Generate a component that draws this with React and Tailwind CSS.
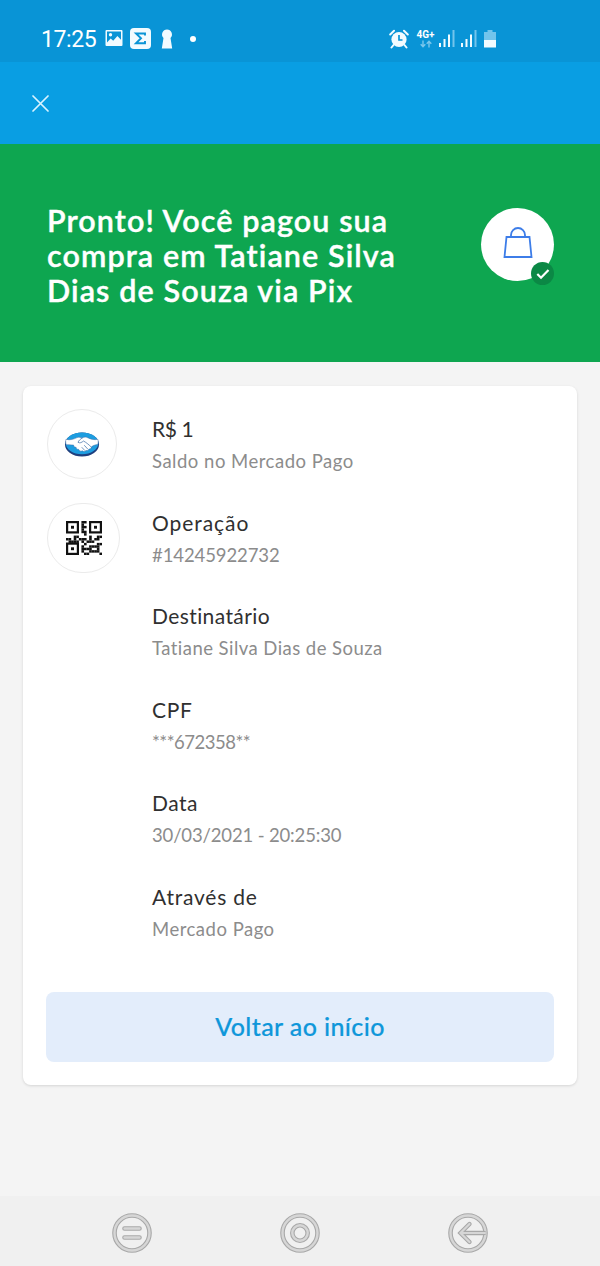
import React from 'react';

// data cells of the code, the three corner finders are drawn apart
const QR_ROWS = [
  '00000011000000',
  '00000010000000',
  '00000011000000',
  '00000010000000',
  '00000011000000',
  '00000001000000',
  '00011000010011',
  '11010111010110',
  '01111010111000',
  '00000001000011',
  '00000010011110',
  '00000011110010',
  '00000010011110',
  '00000001100001',
];

const QR_FINDERS = [
  [0, 0],
  [23, 0],
  [0, 21.5],
];

const details = [
  { label: 'R$ 1', value: 'Saldo no Mercado Pago', icon: 'logo', labelClass: 'tracking-[-0.4px]', valueClass: 'tracking-[0.5px]' },
  { label: 'Operação', value: '#14245922732', icon: 'qr', labelClass: 'tracking-[0.95px]', valueClass: 'tracking-[-0.1px]' },
  { label: 'Destinatário', value: 'Tatiane Silva Dias de Souza', labelClass: 'tracking-[0.4px]', valueClass: 'tracking-[0.45px]' },
  { label: 'CPF', value: '***672358**', labelClass: 'tracking-[0.7px]', valueClass: 'tracking-[-0.5px]' },
  { label: 'Data', value: '30/03/2021 - 20:25:30', labelClass: 'tracking-[0.5px]', valueClass: 'tracking-[-0.15px]' },
  { label: 'Através de', value: 'Mercado Pago', labelClass: 'tracking-[0.8px]', valueClass: 'tracking-[0.5px]' },
];

const HandshakeLogo = () => (
  <svg width="36" height="26" viewBox="0 0 36 26">
    <ellipse cx="18" cy="13.500" rx="17" ry="12" fill="#1f3f7e" />
    <ellipse cx="18" cy="12.300" rx="16.300" ry="10.900" fill="#1d9de0" />
    <path
      d="M2 8.200C6 9.500 9.500 8.300 13 6.600c2-.8 4 .2 5.300.2 2-.9 4-1 6 .2 3 1.300 6 2.200 9.500 1.300.6 2 .6 3.800-.2 5.300-2.400.1-4.300 1-6.100 2.200 0 1.700-1.300 2.400-2.500 2.200-.5 1.500-1.900 1.900-3 1.400-1 1.500-2.700 1.400-3.600.4-1.700.9-3.600.1-3.800-1.500-1.500.2-2.600-.7-2.500-2-1.700.2-2.700-1-2.400-2.200C7.300 14 5 13.400 2.300 13.800 1.500 12 1.500 10 2 8.200z"
      fill="#fff"
      stroke="#3c6ba5"
      strokeWidth=".5"
    />
    <path
      d="M18.300 7c-2 1-3.600 2.600-4.300 4.300 1.700 1.200 3.700.2 5.500-1.300 3 1.600 5.800 4.100 8 6.300M20.500 14.500l3.200 3.500M18 16.500l2.600 2.800"
      fill="none"
      stroke="#3c6ba5"
      strokeWidth=".7"
      strokeLinecap="round"
    />
  </svg>
);

const QrCode = () => (
  <svg width="36" height="34" viewBox="0 0 36 34" fill="#111">
    {QR_FINDERS.map(([x, y]) => (
      <g key={`${x}-${y}`}>
        <rect x={x + 1.1} y={y + 1.1} width="10.800" height="10.300" fill="none" stroke="#111" strokeWidth="2.200" />
        <rect x={x + 5} y={y + 4.8} width="3" height="2.900" />
      </g>
    ))}
    {QR_ROWS.map((row, y) =>
      row.split('').map((cell, x) =>
        cell === '1' ? <rect key={`${x}-${y}`} x={x * 2.57} y={y * 2.43} width="2.620" height="2.480" /> : null
      )
    )}
  </svg>
);

const StatusBar = () => (
  <div className="flex h-[62px] shrink-0 items-center bg-[#0994d6] pt-[15px] pl-[41px] text-white">
    <span className="w-[64px] pt-0.5 font-[Roboto,sans-serif] text-[23px] leading-6 tracking-[-0.4px]">17:25</span>
    <svg width="18" height="18" viewBox="0 0 18 18" className="mb-0.5">
      <path
        fillRule="evenodd"
        fill="#f2fbff"
        d="M1.500 1h15a1 1 0 0 1 1 1v14a1 1 0 0 1-1 1h-15a1 1 0 0 1-1-1V2a1 1 0 0 1 1-1zM2 2.500v11l3.700-4 2.500 2.300 4.200-4.800 3.600 3.700V2.500zM5.500 4a1.700 1.700 0 1 1 0 3.400 1.700 1.700 0 0 1 0-3.400z"
      />
    </svg>
    <svg width="21" height="21" viewBox="0 0 21 21" className="ml-[7px]">
      <rect width="21" height="21" rx="4" fill="#f2fbff" />
      <path d="M15 7.500V5.500H6l5 4.800-5 4.900h9V13" fill="none" stroke="#0994d6" strokeWidth="1.900" />
    </svg>
    <svg width="12" height="20" viewBox="0 0 12 20" className="ml-[10px]">
      <path d="M6 .5a5 5 0 0 1 3.500 8.500l1.700 10.500H.8L2.500 9A5 5 0 0 1 6 .5z" fill="#f2fbff" />
    </svg>
    <span className="ml-[17px] size-1.5 rounded-full bg-white" />

    <svg width="20" height="20" viewBox="0 0 20 20" className="ml-[193px]">
      <circle cx="10" cy="10.500" r="7.600" fill="#f2fbff" />
      <path d="M1.200 5.500L5 1.800M18.800 5.500L15 1.800M4.500 16l-2 2.500M15.500 16l2 2.500" stroke="#f2fbff" strokeWidth="2" strokeLinecap="round" />
      <path d="M10 6v5h3.500" fill="none" stroke="#0994d6" strokeWidth="1.700" />
    </svg>
    <div className="ml-[7px] flex w-[19px] flex-col items-center">
      <span className="font-[Roboto,sans-serif] text-[10px] leading-[10px] font-bold">4G+</span>
      <svg width="12" height="8" viewBox="0 0 12 8" fill="none" stroke="#7cc7ec" strokeWidth="1.400">
        <path d="M3 .5v6M.7 4.300L3 6.800l2.300-2.500M9 7.500v-6M6.700 3.700L9 1.200l2.300 2.500" />
      </svg>
    </div>
    <SignalBars className="ml-1" />
    <SignalBars className="ml-[6px]" />
    <svg width="12" height="18" viewBox="0 0 12 18" className="ml-[7px]">
      <path d="M3.500 0h5v2H12v8H0V2h3.500z" fill="#72c4ec" />
      <path d="M0 10h12v7.500H0z" fill="#f2fbff" />
    </svg>
  </div>
);

const SignalBars = ({ className }) => (
  <svg width="16" height="17" viewBox="0 0 16 17" className={className}>
    <path d="M0 13h2v4H0zM4.500 9h2v8h-2zM9 4.500h2V17H9z" fill="#f2fbff" />
    <path d="M13.500 0h2v17h-2z" fill="#72c4ec" />
  </svg>
);

const Hero = () => (
  <div className="flex h-[218px] shrink-0 items-start justify-between bg-[#0ea650] pt-[59px] pr-[46px] pl-[47px]">
    <h1 className="text-[30.5px] leading-[35px] font-semibold tracking-[1.1px] whitespace-nowrap text-white [-webkit-text-stroke:0.4px_white]">
      Pronto! Você pagou sua
      <br />
      compra em Tatiane Silva
      <br />
      Dias de Souza via Pix
    </h1>
    <div className="relative mt-[5px] flex size-[73px] items-center justify-center rounded-full bg-white">
      <svg width="30" height="33" viewBox="0 0 30 33" fill="none" stroke="#3d7de8" strokeWidth="1.800" className="mb-1">
        <path d="M3.500 11h23L28.500 31h-27zM8 11V9a7 7 0 0 1 14 0v2" />
      </svg>
      <span className="absolute right-0 -bottom-1 flex size-[23px] items-center justify-center rounded-full bg-[#0b8845]">
        <svg width="14" height="12" viewBox="0 0 14 12" fill="none" stroke="#fff" strokeWidth="2.200">
          <path d="M1.300 6l3.700 3.700L12.500 2" />
        </svg>
      </span>
    </div>
  </div>
);

const DetailRow = ({ item }) => (
  <div className="flex h-[70px]">
    <div className="w-[105px]">
      {item.icon === 'logo' && (
        <div className="flex size-[70px] items-center justify-center rounded-full border border-[#ebebeb]">
          <HandshakeLogo />
        </div>
      )}
      {item.icon === 'qr' && (
        <div className="flex h-[70px] w-[73px] items-center justify-center rounded-full border border-[#ebebeb]">
          <QrCode />
        </div>
      )}
    </div>
    <div className="pt-1">
      <p className={`text-[21px] leading-8 text-[#303030] ${item.labelClass}`}>{item.label}</p>
      <p className={`text-[18.5px] leading-8 text-[#8c8c8c] ${item.valueClass}`}>{item.value}</p>
    </div>
  </div>
);

const NavButton = ({ children }) => (
  <svg width="40" height="40" viewBox="0 0 40 40" fill="none">
    <circle cx="20" cy="20" r="17.500" stroke="#a8a8a8" strokeWidth="4.600" />
    <circle cx="20" cy="20" r="17.500" stroke="#d6d6d6" strokeWidth="2.400" />
    {children}
  </svg>
);

const NavBar = () => (
  <div className="flex h-[70px] shrink-0 items-center justify-between bg-[#f0f0f0] px-[112px] pt-[3px]">
    <NavButton>
      <path d="M12.500 15.500h15M12.500 24.500h15" stroke="#a8a8a8" strokeWidth="4.600" strokeLinecap="round" />
      <path d="M12.500 15.500h15M12.500 24.500h15" stroke="#d6d6d6" strokeWidth="2.400" strokeLinecap="round" />
    </NavButton>
    <NavButton>
      <circle cx="20" cy="20" r="7.700" stroke="#a8a8a8" strokeWidth="4.600" />
      <circle cx="20" cy="20" r="7.700" stroke="#d6d6d6" strokeWidth="2.400" />
    </NavButton>
    <NavButton>
      <path d="M21.500 11L12.500 20l9 9M13 20h23" stroke="#a8a8a8" strokeWidth="4.400" strokeLinecap="round" />
      <path d="M21.500 11L12.500 20l9 9M13 20h24" stroke="#d6d6d6" strokeWidth="2.200" strokeLinecap="round" />
    </NavButton>
  </div>
);

const App = () => {
  return (
    <div className="flex h-[1266px] w-[600px] flex-col overflow-hidden bg-[#f4f4f4] font-[Lato,sans-serif]">
      <StatusBar />
      <header className="flex h-[82px] shrink-0 items-center bg-[#099ee3] pl-8">
        <button type="button" aria-label="Fechar">
          <svg width="17" height="17" viewBox="0 0 17 17" stroke="#d9f3ff" strokeWidth="1.700" strokeLinecap="round">
            <path d="M1 1l15 15M16 1L1 16" />
          </svg>
        </button>
      </header>
      <Hero />
      <main className="flex-1 px-[23px] pt-[24px]">
        <div className="flex h-[699px] flex-col rounded-lg bg-white p-[23px] shadow-[0_1px_3px_rgba(0,0,0,0.13)]">
          <div className="flex flex-col gap-[23.5px] pl-px">
            {details.map((item) => (
              <DetailRow key={item.label} item={item} />
            ))}
          </div>
          <button
            type="button"
            className="mt-auto h-[70px] w-full rounded-lg bg-[#e3edfb] text-[25px] font-medium tracking-[0.4px] text-[#0f97da] [-webkit-text-stroke:0.2px_#0f97da]"
          >
            Voltar ao início
          </button>
        </div>
      </main>
      <NavBar />
    </div>
  );
};

export default App;
